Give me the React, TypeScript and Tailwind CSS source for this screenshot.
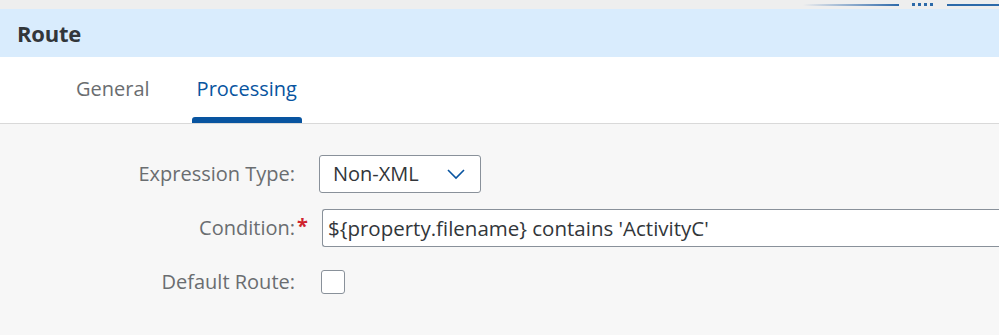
import React from "react";

export default function App() {
  const font = { fontFamily: '"Open Sans", "Liberation Sans", Arial, sans-serif' };
  return (
    <div className="w-[999px] h-[335px] overflow-hidden bg-[#f7f7f7] flex flex-col" style={font}>
      {/* top strip */}
      <div className="h-[9px] bg-[#eeeeee] flex items-center shrink-0">
        <div className="flex-1" />
        <div className="w-[96px] h-[2px] bg-gradient-to-r from-[#eeeeee] to-[#2d6aa9]" />
        <div className="w-[13px]" />
        <div className="flex gap-[3px]">
          <div className="w-[3px] h-[3px] bg-[#2d6aa9]" />
          <div className="w-[3px] h-[3px] bg-[#2d6aa9]" />
          <div className="w-[3px] h-[3px] bg-[#2d6aa9]" />
          <div className="w-[3px] h-[3px] bg-[#2d6aa9]" />
        </div>
        <div className="w-[14px]" />
        <div className="w-[52px] h-[2px] bg-[#2d6aa9]" />
      </div>
      {/* header */}
      <div className="h-[48px] bg-[#d9ecfd] flex items-center pl-[17px] shrink-0">
        <span className="text-[22px] font-bold text-[#32363a] tracking-[-0.2px]">Route</span>
      </div>
      {/* tabs */}
      <div className="h-[67px] bg-white border-b border-[#d9d9d9] flex items-stretch pl-[60px] shrink-0">
        <div className="relative px-[16px] flex items-center text-[20px] text-[#6a6d70] pb-[2px]">General</div>
        <div className="relative px-[5px] ml-[26px] flex items-center text-[20px] text-[#0854a0] pb-[2px]">
          Processing
          <div className="absolute left-0 right-0 bottom-0 h-[6px] bg-[#0854a0] rounded-t-[3px]" />
        </div>
      </div>
      {/* form */}
      <div className="flex flex-col pt-[31px] text-[20px]">
        <div className="flex items-center h-[38px]">
          <div className="w-[295px] text-right text-[#6a6d70]">Expression Type:</div>
          <div className="ml-[24px] w-[162px] h-[38px] bg-white border border-[#89919a] rounded-[3px] flex items-center pl-[13px] pr-[14px] text-[#32363a]">
            <span className="flex-1">Non-XML</span>
            <svg width="20" height="12" viewBox="0 0 20 12" fill="none">
              <path d="M2 2 L10 10 L18 2" stroke="#0854a0" strokeWidth="1.6" />
            </svg>
          </div>
        </div>
        <div className="flex items-center h-[38px] mt-[16px]">
          <div className="w-[295px] text-right text-[#6a6d70]">Condition:</div>
          <div className="w-[27px] text-[#d0232e] font-bold pl-[2px] self-start pt-[2px]">*</div>
          <div className="flex-1 h-[38px] bg-white border border-[#89919a] rounded-l-[3px] border-r-0 flex items-center pl-[5px] text-[20.5px] text-[#32363a] whitespace-nowrap">
            {"${property.filename} contains 'ActivityC'"}
          </div>
        </div>
        <div className="flex items-center h-[38px] mt-[16px]">
          <div className="w-[295px] text-right text-[#6a6d70]">Default Route:</div>
          <div className="ml-[26px] w-[24px] h-[24px] bg-white border border-[#89919a] rounded-[3px]" />
        </div>
      </div>
    </div>
  );
}
